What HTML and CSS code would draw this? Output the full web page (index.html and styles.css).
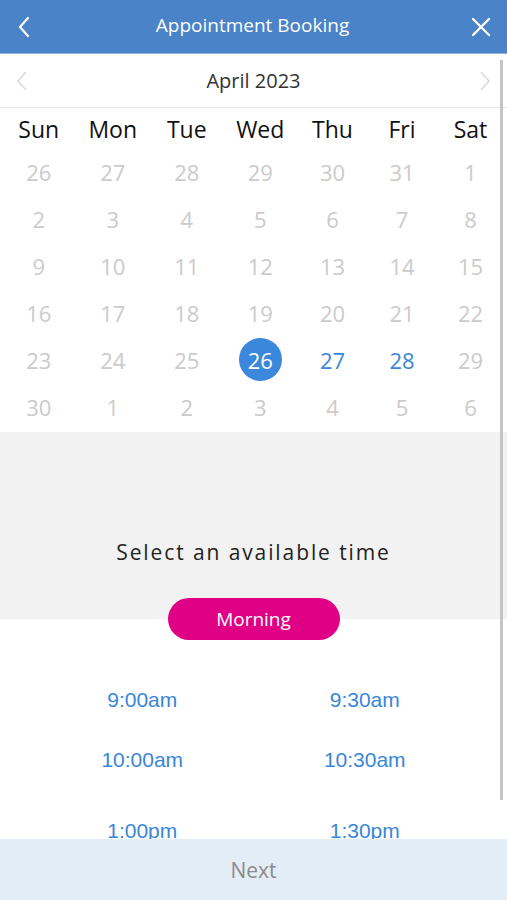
FILE: index.html
```html
<!DOCTYPE html>
<html lang="en">
<head>
    <meta charset="UTF-8">
    <meta name="viewport" content="width=device-width, initial-scale=1.0">
    <title>Appointment Booking</title>
    <link rel="stylesheet" href="styles.css">
</head>
<body>
    <div class="pantalla">
        <div class="cabecera">
            <span class="icono">
                <svg width="14" height="22" viewBox="0 0 14 22"><path d="M11 2 L3 11 L11 20" fill="none" stroke="#fff" stroke-width="2.2" stroke-linecap="round" stroke-linejoin="round"/></svg>
            </span>
            <div class="titulo">Appointment Booking</div>
            <span class="icono">
                <svg width="20" height="20" viewBox="0 0 20 20"><path d="M2 2 L18 18 M18 2 L2 18" fill="none" stroke="#fff" stroke-width="2.4" stroke-linecap="round"/></svg>
            </span>
        </div>

        <div class="contenido">
            <div class="mes">
                <svg width="12" height="22" viewBox="0 0 12 22"><path d="M10 2 L2 11 L10 20" fill="none" stroke="#d9d9d9" stroke-width="1.5"/></svg>
                <span>April 2023</span>
                <svg width="12" height="22" viewBox="0 0 12 22"><path d="M2 2 L10 11 L2 20" fill="none" stroke="#d9d9d9" stroke-width="1.5"/></svg>
            </div>

            <div class="semana">
                <div>Sun</div><div>Mon</div><div>Tue</div><div>Wed</div><div>Thu</div><div>Fri</div><div>Sat</div>
            </div>

            <div class="dias">
                <div>26</div><div>27</div><div>28</div><div>29</div><div>30</div><div>31</div><div>1</div>
                <div>2</div><div>3</div><div>4</div><div>5</div><div>6</div><div>7</div><div>8</div>
                <div>9</div><div>10</div><div>11</div><div>12</div><div>13</div><div>14</div><div>15</div>
                <div>16</div><div>17</div><div>18</div><div>19</div><div>20</div><div>21</div><div>22</div>
                <div>23</div><div>24</div><div>25</div>
                <div><span class="elegido">26</span></div>
                <div class="libre">27</div><div class="libre">28</div><div>29</div>
                <div>30</div><div>1</div><div>2</div><div>3</div><div>4</div><div>5</div><div>6</div>
            </div>

            <div class="zona-hora">
                <p>Select an available time</p>
            </div>
            <div class="turno">Morning</div>

            <div class="horas">
                <div>9:00am</div><div>9:30am</div>
                <div>10:00am</div><div>10:30am</div>
                <div class="tarde">1:00pm</div><div class="tarde">1:30pm</div>
            </div>

            <div class="barra"></div>
        </div>

        <div class="pie">Next</div>
    </div>
</body>
</html>
```

FILE: styles.css
```css
body{
    margin: 0;
    font-family: "Open Sans", "DejaVu Sans", sans-serif;
    background-color: white;
}
.pantalla{
    width: 507px;
    height: 900px;
    display: flex;
    flex-direction: column;
    overflow: hidden;
}
.cabecera{
    height: 53px;
    flex-shrink: 0;
    background-color: #4a83c7;
    display: flex;
    align-items: center;
    justify-content: space-between;
    padding: 0 14px 0 12px;
    border-bottom: 1px solid #8db2dd;
}
.titulo{
    color: white;
    font-size: 19px;
    margin-top: -3px;
}
.icono{
    width: 24px;
    display: flex;
    justify-content: center;
}
.contenido{
    flex: 1;
    position: relative;
    overflow: hidden;
}
.mes{
    height: 53px;
    display: flex;
    align-items: center;
    justify-content: space-between;
    padding: 0 16px;
    border-bottom: 1px solid #e6e6e6;
    color: #333;
    font-size: 20px;
}
.semana, .dias{
    display: grid;
    grid-template-columns: 73.5px 74.5px 73.5px 73.5px 71px 68px 69px;
    padding: 0 0 0 2px;
    text-align: center;
}
.semana{
    height: 42px;
    align-items: center;
    font-size: 23px;
    color: #111;
    margin-bottom: -2px;
}
.dias{
    grid-auto-rows: 47px;
    align-items: center;
    font-size: 22px;
    color: #cbcbcb;
    padding-bottom: 2px;
}
.dias div{
    display: flex;
    justify-content: center;
    align-items: center;
}
.libre{
    color: #3a86d8;
}
.elegido{
    width: 43px;
    height: 43px;
    border-radius: 50%;
    background-color: #3b87dc;
    color: white;
    display: flex;
    justify-content: center;
    align-items: center;
}
.zona-hora{
    height: 187px;
    background-color: #f2f2f2;
    display: flex;
    flex-direction: column;
    justify-content: flex-end;
}
.zona-hora p{
    margin: 0 0 53px 0;
    text-align: center;
    font-size: 21px;
    letter-spacing: 1.9px;
    color: #222;
}
.turno{
    width: 172px;
    height: 42px;
    margin: -21px auto 0 auto;
    border-radius: 21px;
    background-color: #df0086;
    color: white;
    font-size: 19px;
    display: flex;
    justify-content: center;
    align-items: center;
}
.horas{
    display: grid;
    grid-template-columns: 1fr 1fr;
    padding: 48px 31px 0 31px;
    grid-auto-rows: 30px;
    row-gap: 30px;
    text-align: center;
    font-family: "Liberation Sans", Arial, sans-serif;
    font-size: 21px;
    color: #3a86d8;
}
.tarde{
    margin-top: 11px;
}
.barra{
    position: absolute;
    right: 4px;
    top: 6px;
    width: 3px;
    height: 740px;
    background-color: #c4c4c4;
}
.pie{
    height: 61px;
    flex-shrink: 0;
    background-color: #e3edf6;
    color: #8a8a8a;
    font-size: 21px;
    display: flex;
    justify-content: center;
    align-items: center;
}
```
